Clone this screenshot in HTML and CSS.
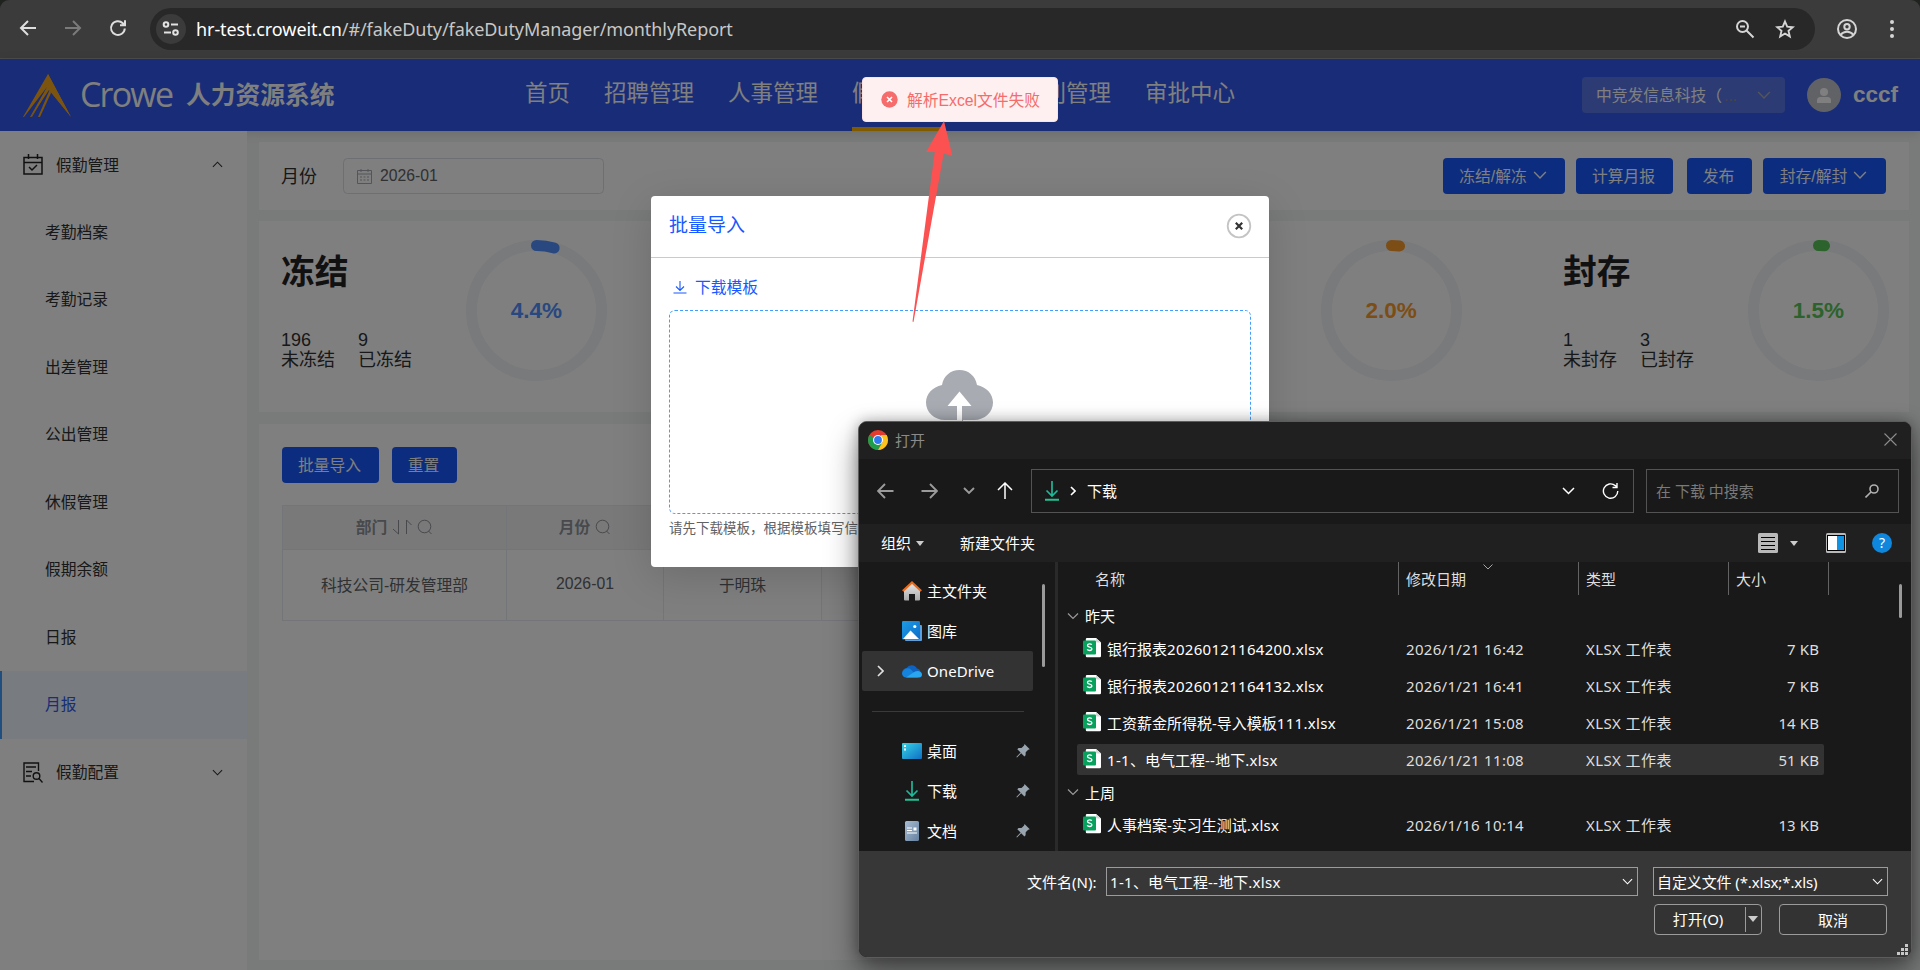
FILE: index.html
```html
<!DOCTYPE html>
<html lang="zh-CN">
<head>
  <meta charset="UTF-8" />
  <meta name="viewport" content="width=device-width, initial-scale=1.0" />
  <title>人力资源系统 - 月报</title>
  <link rel="stylesheet" href="styles.css">
</head>
<body>
  <!-- 公用图标 -->
  <svg class="defs" width="0" height="0">
    <defs>
      <linearGradient id="g-desk" x1="0" y1="0" x2="1" y2="1"><stop offset="0" stop-color="#35d3e6"/><stop offset="1" stop-color="#0f6fc4"/></linearGradient>
      <linearGradient id="g-doc" x1="0" y1="0" x2="1" y2="1"><stop offset="0" stop-color="#a9bdd3"/><stop offset="1" stop-color="#64809f"/></linearGradient>
      <linearGradient id="g-home" x1="0" y1="0" x2="0" y2="1"><stop offset="0" stop-color="#e8e8e8"/><stop offset="1" stop-color="#a8a8a8"/></linearGradient>
      <linearGradient id="g-pic" x1="0" y1="0" x2="1" y2="1"><stop offset="0" stop-color="#1e9be6"/><stop offset="1" stop-color="#0b6cc8"/></linearGradient>
    </defs>
    <symbol id="i-down" viewBox="0 0 12 12"><path d="M1 3.5l5 5 5-5" fill="none" stroke="currentColor" stroke-width="1.2"/></symbol>
    <symbol id="i-search" viewBox="0 0 16 16"><circle cx="7.5" cy="7.5" r="6.3" fill="none" stroke="currentColor"/><path d="M11.5 12l3 3" stroke="currentColor"/></symbol>
    <symbol id="i-dl" viewBox="0 0 14 20"><path d="M7 0v15M1.5 9.5L7 15l5.500-5.500" fill="none" stroke="#1fb899" stroke-width="1.7"/><path d="M0 18.700h14" stroke="#25c095" stroke-width="2"/></symbol>
    <symbol id="i-xls" viewBox="0 0 18 20">
      <path d="M4 0h9l5 4.500V18a1.200 1.200 0 0 1-1.200 1.200H4A1.200 1.200 0 0 1 2.800 18V1.200A1.200 1.200 0 0 1 4 0z" fill="#fff"/>
      <path d="M13 0l5 4.500h-4a1 1 0 0 1-1-1z" fill="#d5dbd8"/>
      <rect x="0" y="2.500" width="13" height="14" rx="1" fill="#07a05c"/>
      <path d="M8.800 6.700C8.300 6 7.500 5.800 6.600 5.800c-1.300 0-2.100.6-2.100 1.600 0 2.300 4.400 1 4.400 3.400 0 1.100-.9 1.700-2.300 1.700-1 0-1.900-.3-2.400-1.100" fill="none" stroke="#fff" stroke-width="1.300"/>
    </symbol>
    <symbol id="i-pin" viewBox="0 0 14 14"><path d="M8.500 0l5.300 5.300-1.600.4-2.500 2.600-.1 3-1.200 1.200L5.200 9.200 1 13.600l-.7-.7 4.300-4.300L1.300 5.300l1.200-1.200 3-.1 2.600-2.500z" fill="#98a4ae"/></symbol>
  </svg>

  <!-- 浏览器地址栏 -->
  <div class="browser-bar">
    <div class="browser-nav">
      <svg width="18" height="18" viewBox="0 0 18 18"><path d="M17 9H2.500M9 2L2 9l7 7" fill="none" stroke="#dedede" stroke-width="2"/></svg>
      <svg width="18" height="18" viewBox="0 0 18 18"><path d="M1 9h14.500M9 2l7 7-7 7" fill="none" stroke="#7b7b7b" stroke-width="2"/></svg>
      <svg width="18" height="18" viewBox="0 0 18 18"><path d="M15.800 9.500a6.900 6.900 0 1 1-2-5.300l1.700 1.700M16 1.200v5h-5" fill="none" stroke="#dedede" stroke-width="2"/></svg>
    </div>
    <div class="omnibox">
      <span class="site-info">
        <svg width="18" height="18" viewBox="0 0 18 18" fill="none" stroke="#e3e3e3" stroke-width="2"><circle cx="4" cy="4.500" r="2.300"/><path d="M9 4.500h7"/><circle cx="13.500" cy="12.500" r="2.300"/><path d="M2 12.500h7"/></svg>
      </span>
      <span class="url"><b>hr-test.croweit.cn</b>/#/fakeDuty/fakeDutyManager/monthlyReport</span>
      <svg class="zoom" width="20" height="20" viewBox="0 0 20 20" fill="none" stroke="#d5d5d5" stroke-width="2"><circle cx="7.500" cy="7.500" r="5.500"/><path d="M11.500 11.500l7 7M5 7.500h5"/></svg>
      <svg width="20" height="20" viewBox="0 0 20 20"><path d="M10 2.500l2.200 5.200 5.600.5-4.300 3.700 1.300 5.500-4.800-2.900-4.800 2.900 1.300-5.500L2.200 8.200l5.600-.5z" fill="none" stroke="#d5d5d5" stroke-width="1.900"/></svg>
    </div>
    <svg class="profile" width="22" height="22" viewBox="0 0 22 22" fill="none" stroke="#d5d5d5" stroke-width="2"><circle cx="11" cy="11" r="9"/><circle cx="11" cy="8.800" r="2.700"/><path d="M4.500 17c2-2.700 4-3.300 6.500-3.300s4.500.6 6.500 3.300"/></svg>
    <svg width="6" height="20" viewBox="0 0 6 20" fill="#d5d5d5"><circle cx="3" cy="3" r="2"/><circle cx="3" cy="10" r="2"/><circle cx="3" cy="17" r="2"/></svg>
  </div>

  <div class="app">
    <header class="header">
      <svg class="logo-mark" width="48" height="43" viewBox="0 0 48 43" fill="#f9a91a">
        <path d="M25 0L48 43 26 16 8 43H7L24 13 1 43H0z"/>
        <path d="M26 14L9 43H8l13-22z"/><path d="M27 15L15 43h2l11-24z"/><path d="M25 0l23 43-20-25-4-8z"/>
      </svg>
      <span class="logo-text">Crowe</span>
      <span class="system-name">人力资源系统</span>
      <nav class="nav">
        <a>首页</a><a>招聘管理</a><a>人事管理</a><a class="active">假勤管理</a><a>薪酬福利管理</a><a>审批中心</a>
      </nav>
      <div class="company"><span>中竞发信息科技（<i>...</i></span><svg width="14" height="14"><use href="#i-down"/></svg></div>
      <span class="avatar"><svg width="14" height="15" viewBox="0 0 14 15" fill="#fff"><circle cx="7" cy="4" r="4"/><path d="M0 15v-2.500A3.500 3.500 0 0 1 3.500 9h7a3.500 3.500 0 0 1 3.500 3.500V15z"/></svg></span>
      <span class="user">cccf</span>
    </header>

    <div class="main">
      <aside class="sidebar">
        <div class="menu-title">
          <svg width="20" height="21" viewBox="0 0 20 21" fill="none" stroke="#222" stroke-width="1.500"><rect x="1" y="3.500" width="18" height="16.500"/><path d="M1 8.500h18M5.500 0v5M14.500 0v5M6 13l3 3 5-5"/></svg>
          <span>假勤管理</span>
          <svg class="arrow up" width="11" height="11"><use href="#i-down"/></svg>
        </div>
        <a>考勤档案</a>
        <a>考勤记录</a>
        <a>出差管理</a>
        <a>公出管理</a>
        <a>休假管理</a>
        <a>假期余额</a>
        <a>日报</a>
        <a class="active">月报</a>
        <div class="menu-title">
          <svg width="20" height="21" viewBox="0 0 20 21" fill="none" stroke="#222" stroke-width="1.400"><path d="M11 19.500H1V1h14.500v8M3 5h10M3 9.500h6M3 14h5"/><circle cx="13.500" cy="14" r="3.300"/><path d="M16 16.500l3.500 4"/></svg>
          <span>假勤配置</span>
          <svg class="arrow" width="11" height="11"><use href="#i-down"/></svg>
        </div>
      </aside>

      <div class="content">
        <section class="card filter">
          <label>月份</label>
          <div class="date-input">
            <svg width="15" height="15" viewBox="0 0 15 15" fill="none" stroke="#a8abb2"><path d="M.5 1.500h14v13H.5zM.5 5h14M4 0v3M11 0v3"/><path d="M3 8h9M3 11h9" stroke-dasharray="2 1.500"/></svg>
            <span>2026-01</span>
          </div>
          <button class="btn w-122">冻结/解冻<svg width="14" height="14"><use href="#i-down"/></svg></button>
          <button class="btn w-97">计算月报</button>
          <button class="btn w-65 shift">发布</button>
          <button class="btn w-123">封存/解封<svg width="14" height="14"><use href="#i-down"/></svg></button>
        </section>

        <section class="card stats">
          <div class="stat">
            <div class="stat-info">
              <h2>冻结</h2>
              <div class="nums"><p>196<br>未冻结</p><p>9<br>已冻结</p></div>
            </div>
            <div class="ring blue">
              <svg width="141" height="141" viewBox="0 0 141 141"><circle cx="70.500" cy="70.500" r="65"/><circle class="bar" cx="70.500" cy="70.500" r="65" pathLength="100" stroke-dasharray="4.4 100"/></svg>
              <span>4.4%</span>
            </div>
          </div>
          <div class="stat"></div>
          <div class="stat">
            <div class="stat-info"></div>
            <div class="ring orange">
              <svg width="141" height="141" viewBox="0 0 141 141"><circle cx="70.500" cy="70.500" r="65"/><circle class="bar" cx="70.500" cy="70.500" r="65" pathLength="100" stroke-dasharray="2 100"/></svg>
              <span>2.0%</span>
            </div>
          </div>
          <div class="stat">
            <div class="stat-info">
              <h2>封存</h2>
              <div class="nums"><p>1<br>未封存</p><p>3<br>已封存</p></div>
            </div>
            <div class="ring green">
              <svg width="141" height="141" viewBox="0 0 141 141"><circle cx="70.500" cy="70.500" r="65"/><circle class="bar" cx="70.500" cy="70.500" r="65" pathLength="100" stroke-dasharray="1.5 100"/></svg>
              <span>1.5%</span>
            </div>
          </div>
        </section>

        <section class="card list">
          <div class="list-buttons">
            <button class="btn w-97">批量导入</button>
            <button class="btn w-65">重置</button>
          </div>
          <div class="table">
            <div class="th">部门
              <svg class="sort" width="20" height="16" viewBox="0 0 20 16" fill="none" stroke="currentColor"><path d="M1 10l5.500 5V1M14.500 15V1l5 5"/></svg>
              <svg width="16" height="16"><use href="#i-search"/></svg>
            </div>
            <div class="th">月份<svg width="16" height="16"><use href="#i-search"/></svg></div>
            <div class="th"></div>
            <div class="th"></div>
            <div class="td">科技公司-研发管理部</div>
            <div class="td">2026-01</div>
            <div class="td">于明珠</div>
            <div class="td"></div>
          </div>
        </section>
      </div>
    </div>
    <div class="mask"></div>
  </div>

  <!-- 批量导入弹窗 -->
  <div class="modal">
    <div class="modal-header">
      <h3>批量导入</h3>
      <svg width="26" height="26" viewBox="0 0 26 26" fill="none"><circle cx="13" cy="13" r="11.300" stroke="#c4c4c4" stroke-width="1.800"/><path d="M9.800 9.800l6.400 6.400M16.200 9.800l-6.400 6.400" stroke="#333" stroke-width="2.200"/></svg>
    </div>
    <div class="modal-body">
      <div class="download">
        <svg width="14" height="14" viewBox="0 0 14 14" fill="none" stroke="#1859ff" stroke-width="1.100"><path d="M7 1v9M3 6.500l4 4 4-4M.5 13h13"/></svg>
        <span>下载模板</span>
      </div>
      <div class="upload">
        <svg width="67" height="58" viewBox="0 0 67 58" fill="#a8abb2"><path d="M30 50H19C8 50 0 42 0 32.500 0 24 6.500 17 16 15 17.500 6 24.500 0 33.500 0S49.500 6 51 15c9.500 2 16 9 16 17.500C67 42 59 50 48 50H37v8h-6v-8z"/><path d="M31 58V36h-9.500L33.500 21.500 45.500 36H36v22z" fill="#fff"/></svg>
      </div>
      <p class="hint">请先下载模板，根据模板填写信</p>
    </div>
  </div>

  <div class="message">
    <svg width="17" height="17" viewBox="0 0 17 17"><circle cx="8.500" cy="8.500" r="8.200" fill="#f56c6c"/><path d="M6 6l5 5M11 6l-5 5" stroke="#fff" stroke-width="1.600"/></svg>
    <span>解析Excel文件失败</span>
  </div>

  <!-- 打开文件窗口 -->
  <div class="file-dialog">
    <div class="fd-title">
      <svg width="20" height="20" viewBox="0 0 20 20"><circle cx="10" cy="10" r="10" fill="#e33b2e"/><path d="M1.340 5A10 10 0 0 0 10 20l4.300-7.500L10 10z" fill="#1e9e4a"/><path d="M18.660 5A10 10 0 0 1 10 20l4.330-7.500L13 5z" fill="#fcc31e"/><circle cx="10" cy="10" r="5" fill="#fff"/><circle cx="10" cy="10" r="3.900" fill="#2f7af0"/></svg>
      <span>打开</span>
      <svg class="close" width="13" height="13" viewBox="0 0 13 13"><path d="M.5.5l12 12M12.500.5l-12 12" stroke="#8c8c8c" stroke-width="1.100"/></svg>
    </div>
    <div class="fd-nav">
      <svg width="17" height="16" viewBox="0 0 17 16" fill="none" stroke="#9b9b9b" stroke-width="1.900"><path d="M16.500 8H1.500M8 1L1 8l7 7"/></svg>
      <svg width="17" height="16" viewBox="0 0 17 16" fill="none" stroke="#9b9b9b" stroke-width="1.900"><path d="M.5 8h15M9 1l7 7-7 7"/></svg>
      <svg class="recent" width="12" height="8" viewBox="0 0 12 8" fill="none" stroke="#9b9b9b" stroke-width="1.900"><path d="M1 1l5 5 5-5"/></svg>
      <svg width="16" height="17" viewBox="0 0 16 17" fill="none" stroke="#fff" stroke-width="1.500"><path d="M8 17V1.500M1 8l7-7 7 7"/></svg>
      <div class="address">
        <svg width="14" height="20"><use href="#i-dl"/></svg>
        <svg width="6" height="10" viewBox="0 0 6 10" fill="none" stroke="#fff" stroke-width="1.600"><path d="M1 1l4 4-4 4"/></svg>
        <span>下载</span>
        <svg class="drop" width="13" height="8" viewBox="0 0 13 8" fill="none" stroke="#fff" stroke-width="1.500"><path d="M1 1l5.500 5.500L12 1"/></svg>
        <svg width="17" height="18" viewBox="0 0 17 18" fill="none" stroke="#fff" stroke-width="1.400"><path d="M15.800 9a7.200 7.200 0 1 1-2.500-5.400L15 5.200M15 1v4.500h-4.500"/></svg>
      </div>
      <div class="search">
        <span>在 下载 中搜索</span>
        <svg width="14" height="14" viewBox="0 0 14 14" fill="none" stroke="#b0b0b0" stroke-width="1.600"><circle cx="9" cy="5" r="4"/><path d="M6 8L.5 13.500"/></svg>
      </div>
    </div>
    <div class="fd-tools">
      <span>组织</span><i class="caret"></i>
      <span class="new-folder">新建文件夹</span>
      <svg class="view" width="20" height="20" viewBox="0 0 20 20"><rect width="20" height="20" rx="1.500" fill="#b9b9b9"/><path d="M3 4.500h14M3 8.500h14M3 12.500h14M3 16.500h14" stroke="#000" stroke-width="1"/></svg>
      <i class="caret"></i>
      <svg class="pane" width="20" height="20" viewBox="0 0 20 20"><rect width="20" height="20" rx="1.500" fill="#b9b9b9"/><path d="M1 2h18v16H1z" fill="#000"/><path d="M2 3h9v14H2z" fill="#fff"/><path d="M11 3h7v14h-7z" fill="#1193e4"/></svg>
      <span class="help">?</span>
    </div>
    <div class="fd-body">
      <div class="tree">
        <div class="node"><svg width="20" height="20" viewBox="0 0 20 20"><path d="M2 9l8-7 8 7v9.500a1 1 0 0 1-1 1h-4V13H7v6.500H3a1 1 0 0 1-1-1z" fill="url(#g-home)"/><path d="M.8 10L10 1.500 19.200 10" fill="none" stroke="#ea6a1c" stroke-width="2.200"/></svg><span>主文件夹</span></div>
        <div class="node"><svg width="20" height="20" viewBox="0 0 20 20"><path d="M3 4h16a1 1 0 0 1 1 1v14a1 1 0 0 1-1 1H4a1 1 0 0 1-1-1z" fill="#5aa0e0"/><rect width="18" height="18.500" rx="1.200" fill="url(#g-pic)"/><path d="M1 18l7.500-8.500L17 18z" fill="#fff"/><circle cx="12.800" cy="5.500" r="1.600" fill="#fff"/></svg><span>图库</span></div>
        <div class="node current"><svg class="expand" width="7" height="12" viewBox="0 0 7 12"><path d="M1 1l5 5-5 5" fill="none" stroke="#e0e0e0" stroke-width="1.700"/></svg><svg width="20" height="14" viewBox="0 0 20 14"><path d="M5 13a4.500 4.500 0 0 1-.5-9A6 6 0 0 1 15 4.500a4.500 4.500 0 0 1 1 8.500z" fill="#0f62c0"/><path d="M4 13.500a4 4 0 0 1-3-6.500c3-3.500 6-3 8-1.500l7 8z" fill="#1583dc"/><path d="M4 13.500l9-6c3-1.500 7 0 7 3a3 3 0 0 1-3 3z" fill="#2aa6ee"/></svg><span class="latin">OneDrive</span></div>
        <div class="tree-line"></div>
        <div class="node"><svg width="20" height="16" viewBox="0 0 20 16"><rect width="20" height="16" rx="1" fill="url(#g-desk)"/><path d="M2 2h2v2H2zM2 5.500h2v2H2z" fill="#fff"/></svg><span>桌面</span><svg class="pin" width="14" height="14"><use href="#i-pin"/></svg></div>
        <div class="node"><svg width="20" height="20"><use href="#i-dl"/></svg><span>下载</span><svg class="pin" width="14" height="14"><use href="#i-pin"/></svg></div>
        <div class="node"><svg width="20" height="20" viewBox="0 0 20 20"><rect x="3" width="14" height="20" rx="1.500" fill="url(#g-doc)"/><path d="M5 7h5M5 9.500h5M5 12h10" stroke="#fff" stroke-width="1.200"/><path d="M11.500 6.500h3v3h-3z" fill="#fff"/></svg><span>文档</span><svg class="pin" width="14" height="14"><use href="#i-pin"/></svg></div>
      </div>
      <div class="tree-scroll"></div>
      <div class="files">
        <div class="file-head">
          <span>名称</span>
          <span>修改日期<svg class="sorted" width="10" height="6" viewBox="0 0 10 6"><path d="M.5.500L5 5 9.500.500" fill="none" stroke="#a5a5a5"/></svg></span>
          <span>类型</span>
          <span>大小</span>
          <span></span>
        </div>
        <div class="group"><svg width="12" height="12"><use href="#i-down"/></svg>昨天</div>
        <div class="file"><span><svg width="18" height="20"><use href="#i-xls"/></svg>银行报表<em>20260121164200.xlsx</em></span><span>2026/1/21 16:42</span><span>XLSX 工作表</span><span>7 KB</span></div>
        <div class="file"><span><svg width="18" height="20"><use href="#i-xls"/></svg>银行报表<em>20260121164132.xlsx</em></span><span>2026/1/21 16:41</span><span>XLSX 工作表</span><span>7 KB</span></div>
        <div class="file"><span><svg width="18" height="20"><use href="#i-xls"/></svg>工资薪金所得税-导入模板<em>111.xlsx</em></span><span>2026/1/21 15:08</span><span>XLSX 工作表</span><span>14 KB</span></div>
        <div class="file selected"><span><svg width="18" height="20"><use href="#i-xls"/></svg><em>1-1</em>、电气工程<em>--</em>地下<em>.xlsx</em></span><span>2026/1/21 11:08</span><span>XLSX 工作表</span><span>51 KB</span></div>
        <div class="group last-week"><svg width="12" height="12"><use href="#i-down"/></svg>上周</div>
        <div class="file"><span><svg width="18" height="20"><use href="#i-xls"/></svg>人事档案-实习生测试<em>.xlsx</em></span><span>2026/1/16 10:14</span><span>XLSX 工作表</span><span>13 KB</span></div>
      </div>
      <div class="file-scroll"></div>
    </div>
    <div class="fd-footer">
      <div class="fd-row">
        <label>文件名(N):</label>
        <div class="field name"><span><em>1-1</em>、电气工程<em>--</em>地下<em>.xlsx</em></span><svg width="11" height="11"><use href="#i-down"/></svg></div>
        <div class="field type"><span>自定义文件 (*.xlsx;*.xls)</span><svg width="11" height="11"><use href="#i-down"/></svg></div>
      </div>
      <div class="fd-row actions">
        <div class="fd-btn open"><span>打开(O)</span><i class="caret"></i></div>
        <div class="fd-btn">取消</div>
      </div>
      <svg class="grip" width="12" height="12" viewBox="0 0 12 12" fill="#c8c8c8"><path d="M8 0h3v3H8zM8 4h3v3H8zM4 4h3v3H4zM8 8h3v3H8zM4 8h3v3H4zM0 8h3v3H0z"/></svg>
    </div>
  </div>

  <!-- 标注箭头 -->
  <svg class="pointer" width="40" height="204" viewBox="912 120 40 204"><path d="M944 121L952.500 156 943.700 153.500 913.500 322 912.500 321.500 934.700 152 926 152z" fill="#fc5151"/></svg>
</body>
</html>
```
FILE: styles.css
```css
* { box-sizing: border-box; }
body {
  margin: 0;
  width: 1920px;
  height: 970px;
  overflow: hidden;
  position: relative;
  background: #202220;
  font-family: "Liberation Sans", "Noto Sans CJK SC", sans-serif;
  font-size: 15.75px;
  color: #303133;
}
h2, h3, p { margin: 0; }
i, em { font-style: normal; }
svg { flex: none; display: block; }
.defs { position: absolute; }

/* 浏览器 */
.browser-bar {
  height: 59px;
  background: #3b3b3b;
  border-bottom: 1px solid #4c4c4c;
  border-radius: 9px 9px 0 0;
  display: flex;
  align-items: center;
  padding-left: 19px;
}
.browser-nav { display: flex; gap: 27px; width: 131px; margin-top: -2px; }
.omnibox {
  width: 1665px;
  height: 42px;
  border-radius: 21px;
  background: #282828;
  display: flex;
  align-items: center;
  padding: 0 20px 0 6px;
}
.site-info {
  width: 30px; height: 30px;
  border-radius: 50%;
  background: #3b3b3b;
  display: flex; align-items: center; justify-content: center;
}
.url {
  font-family: "Noto Sans", sans-serif;
  font-size: 18px;
  letter-spacing: -.08px;
  color: #c7c7c7;
  margin-left: 10px;
  padding-bottom: 1px;
}
.url b { font-weight: 400; color: #fff; }
.zoom { margin-left: auto; margin-right: 20px; }
.profile { margin: 0 31px 0 21px; }

/* 顶栏 */
.app {
  position: relative;
  height: 911px;
  background: #f3f4f5;
}
.header {
  height: 72px;
  background: #3058f0;
  color: #fff;
  display: flex;
  align-items: center;
  padding-left: 23px;
  box-shadow: 0 2px 10px rgba(0, 0, 0, .12);
}
.logo-text {
  font-family: "Open Sans", sans-serif;
  font-weight: 400;
  font-size: 34px;
  letter-spacing: -1.8px;
  margin: -2px 0 0 9px;
  width: 106px;
}
.system-name { font-size: 24.75px; font-weight: 700; width: 339px; margin-top: -4px; }
.nav { display: flex; gap: 34px; height: 72px; width: 1057px; flex: none; }
.nav a { font-size: 22.5px; line-height: 69px; white-space: nowrap; }
.nav .active { border-bottom: 4px solid #ffb400; }
.company {
  width: 203px; height: 36px;
  flex: none;
  background: #5a76e8;
  border-radius: 4px;
  display: flex; align-items: center; justify-content: space-between;
  padding: 0 14px;
}
.company span { padding-bottom: 1px; }
.company i { color: #8c8c8c; margin-left: 2px; }
.company svg { color: #a8abb2; }
.avatar {
  width: 34px; height: 34px;
  flex: none;
  margin: 0 12px 0 22px;
  border-radius: 50%;
  background: #c0c4cc;
  display: flex; align-items: center; justify-content: center;
}
.user { font-size: 22.5px; font-weight: 700; }

/* 左侧菜单 */
.main { display: flex; height: 839px; }
.sidebar { width: 247px; background: #fff; }
.sidebar a {
  display: block;
  height: 67.5px;
  line-height: 67.5px;
  padding-left: 45px;
}
.sidebar .active {
  background: #f0f7ff;
  color: #325af2;
  border-left: 2px solid #409eff;
  padding-left: 43px;
}
.menu-title {
  height: 67.5px;
  display: flex; align-items: center;
  padding: 0 24px 0 23px;
}
.menu-title span { margin-left: 13px; padding-bottom: 1px; }
.menu-title .arrow { margin-left: auto; }
.up { transform: rotate(180deg); }

/* 内容区 */
.content { width: 1662px; padding: 11px 0 0 12px; }
.card { background: #fff; }
.filter {
  height: 68px;
  display: flex; align-items: center;
  padding: 0 23px 0 22px;
}
.filter label { font-size: 18px; width: 62px; padding-bottom: 2px; }
.date-input {
  width: 261px; height: 36px;
  border: 1px solid #dcdfe6;
  border-radius: 4.5px;
  display: flex; align-items: center; gap: 8px;
  padding-left: 13px;
  margin-right: auto;
  color: #606266;
}
.btn {
  height: 36px;
  border: 0;
  border-radius: 4px;
  padding: 0 2px 2px 0;
  margin-right: 11px;
  background: #1859ff;
  color: #fff;
  font: inherit;
  display: flex; align-items: center; justify-content: center; gap: 6px;
}
.filter .btn:last-child { margin-right: 0; }
.filter .shift { margin-left: 3px; }
.w-122 { width: 122px; }
.w-97 { width: 97px; }
.w-65 { width: 65px; }
.w-123 { width: 123px; }

.stats {
  height: 191px;
  margin-top: 11px;
  display: grid;
  grid-template-columns: repeat(4, 427.3px);
  overflow: hidden;
}
.stat { display: flex; padding: 19px 0 0 22px; }
.stat-info { width: 185px; padding-top: 6px; }
.stat h2 { font-size: 33.75px; line-height: 52px; color: #222; }
.nums { display: flex; gap: 23px; margin-top: 32px; font-size: 18px; line-height: 20px; }
.ring {
  width: 141px; height: 141px;
  display: grid;
  place-items: center;
}
.ring svg, .ring span { grid-area: 1 / 1; }
.ring span { font-size: 22.5px; font-weight: 700; color: var(--c); }
.ring svg { transform: rotate(-90deg); }
.ring circle { fill: none; stroke: #f2f4f8; stroke-width: 11px; }
.ring .bar { stroke: var(--c); stroke-linecap: round; }
.blue { --c: #5090ff; }
.orange { --c: #fb9a2c; }
.green { --c: #58c658; }

.list { height: 536px; margin-top: 12px; padding: 23px 0 0 23px; overflow: hidden; }
.list-buttons { display: flex; gap: 2px; }
.table {
  display: grid;
  grid-template-columns: 224px 157px 158px 1066px;
  grid-template-rows: 44px 71px;
  margin-top: 22px;
  width: 1605px;
  border-top: 1px solid #e8eaf0;
  border-left: 1px solid #e8eaf0;
}
.th, .td {
  border-right: 1px solid #e8eaf0;
  border-bottom: 1px solid #e8eaf0;
  padding-bottom: 2px;
  display: flex; align-items: center; justify-content: center;
}
.th { background: #f3f3f4; font-weight: 700; color: #909399; gap: 5px; }
.td { color: #606266; }

.mask { position: absolute; inset: 0; background: rgba(0, 0, 0, .5); }

/* 弹窗 */
.modal {
  position: absolute;
  left: 651px; top: 196px;
  width: 618px; height: 371px;
  background: #fff;
  border-radius: 4px;
  box-shadow: 0 10px 40px rgba(0, 0, 0, .15);
}
.modal-header {
  height: 62px;
  border-bottom: 1px solid #c8cacc;
  display: flex; justify-content: space-between; align-items: center;
  padding: 0 17px 0 18px;
}
.modal h3 { font-size: 19px; font-weight: 400; color: #1859ff; margin-top: -6px; }
.modal-header svg { margin-top: -1px; }
.modal-body { padding: 17px 18px 0; }
.download { display: flex; align-items: center; gap: 8px; padding-left: 4px; height: 24px; color: #1859ff; }
.download span { padding-bottom: 1px; }
.upload {
  height: 204px;
  margin-top: 11px;
  border: 1px dashed #409eff;
  border-radius: 6px;
  display: flex; justify-content: center;
  padding: 59px 1px 0 0;
}
.hint { font-size: 13.5px; line-height: 20px; margin-top: 5px; color: #606266; }

.message {
  position: absolute;
  left: 862px; top: 77px;
  width: 196px; height: 45px;
  border: 1px solid #fde2e2;
  border-radius: 4px;
  background: #fef0f0;
  color: #f56c6c;
  display: flex; align-items: center; gap: 9px;
  padding: 0 0 1px 18px;
}

/* 文件选择窗口 */
.file-dialog {
  position: absolute;
  left: 858px; top: 421px;
  width: 1054px; height: 537px;
  border: 1px solid #5c5c5c;
  border-radius: 9px;
  overflow: hidden;
  background: #191919;
  color: #fff;
  font-family: "Noto Sans", "Noto Sans CJK SC", sans-serif;
  font-size: 15px;
  box-shadow: 0 16px 32px rgba(0, 0, 0, .42), 0 0 14px rgba(0, 0, 0, .3);
}
.fd-title {
  height: 37px;
  background: #202020;
  display: flex; align-items: center; gap: 7px;
  padding: 0 14px 2px 9px;
  color: #8b8b8b;
}
.close { margin-left: auto; }
.fd-nav { height: 65px; display: flex; align-items: center; padding: 0 0 2px 18px; }
.fd-nav > svg { margin-right: 27px; }
.fd-nav > .recent { margin: 0 22px 0 -2px; }
.fd-nav > .recent + svg { margin-right: 18px; }
.address, .search {
  height: 44px;
  border: 1px solid #535353;
  display: flex; align-items: center;
}
.address { width: 603px; padding: 0 14px 0 13px; margin-right: 12px; }
.address span { margin-left: 11px; }
.address svg + svg { margin-left: 11px; }
.address .drop { margin: 0 27px 0 auto; }
.address .drop + svg { margin-left: 0; }
.search { width: 253px; padding: 0 19px 0 9px; justify-content: space-between; color: #7a7a7a; }
.fd-tools {
  height: 38px;
  background: #202020;
  display: flex; align-items: center;
  padding: 0 19px 0 22px;
}
.fd-tools > span { padding-bottom: 1px; }
.caret {
  border: 4px solid transparent;
  border-top: 5px solid #ccc;
  border-bottom: 0;
  margin-left: 5px;
}
.new-folder { margin-left: 36px; }
.view { margin-left: auto; }
.view + .caret { margin-left: 12px; }
.pane { margin: 0 26px 0 28px; }
.help {
  width: 20px; height: 20px;
  border-radius: 50%;
  background: #0f87dc;
  font-size: 14px; line-height: 20px;
  text-align: center;
}
.fd-body { height: 289px; display: flex; }
.tree { width: 171px; flex: none; padding: 9px 0 0; margin-left: 3px; }
.node {
  height: 40px;
  display: flex; align-items: center; gap: 5px;
  padding-left: 40px;
  position: relative;
}
.node span { padding-bottom: 1px; }
.latin { letter-spacing: .1px; }
.current { background: #333; border-radius: 2px; }
.expand { position: absolute; left: 15px; }
.pin { margin: 0 3px 0 auto; }
.tree-line { height: 1px; background: #3a3a3a; margin: 20px 9px 19px 10px; }
.tree-scroll { width: 3px; height: 83px; flex: none; border-radius: 2px; background: #9a9a9a; margin: 22px 10px 0 9px; }
.files { width: 840px; flex: none; border-left: 3px solid #2a2a2a; padding-left: 19px; }
.file-head {
  display: grid;
  grid-template-columns: 321px 180px 150px 100px 1px;
  height: 36px;
  line-height: 34px;
  color: #dedede;
}
.file-head span { height: 33px; border-left: 1px solid #636363; padding-left: 7px; position: relative; }
.file-head span:first-child { border: 0; padding-left: 18px; }
.file-head span:last-child { padding: 0; }
.sorted { position: absolute; left: 84px; top: 2px; }
.group { height: 35px; display: flex; align-items: center; gap: 6px; margin-left: -10px; }
.group svg { color: #999; }
.file {
  width: 747px; height: 31px;
  margin-bottom: 6px;
  display: grid;
  grid-template-columns: 329px 180px 138px 95px;
  align-items: center;
  color: #dedede;
  letter-spacing: .3px;
}
.file span:first-child { display: flex; align-items: center; padding-left: 6px; color: #fff; white-space: nowrap; letter-spacing: 0; }
.file span:first-child svg { margin: -2px 6px 0 0; }
.file em { letter-spacing: .3px; }
.file span:nth-child(3) { letter-spacing: .4px; }
.file span:last-child { text-align: right; letter-spacing: .1px; }
.selected { background: #333; border-radius: 2px; margin-bottom: 0; }
.group.last-week { height: 34px; }
.file-scroll { width: 3px; height: 34px; flex: none; border-radius: 2px; background: #9a9a9a; margin: 22px 0 0 4px; }

.fd-footer { height: 106px; background: #373737; padding-top: 16px; position: relative; }
.fd-row { display: flex; align-items: center; height: 29px; padding-left: 168px; }
.fd-row label { width: 79px; padding-bottom: 1px; }
.field {
  height: 29px;
  border: 1px solid #9b9b9b;
  display: flex; align-items: center; justify-content: space-between;
  padding: 0 4px 1px 3px;
}
.field em { letter-spacing: .3px; }
.name { width: 532px; margin-right: 15px; }
.type { width: 235px; background: #323232; letter-spacing: -.1px; }
.actions { height: 31px; margin-top: 8px; padding: 0 24px 0 0; justify-content: flex-end; gap: 17px; }
.fd-btn {
  width: 108px; height: 31px;
  border: 1px solid #9b9b9b;
  border-radius: 4px;
  background: #333;
  padding-bottom: 1px;
  display: flex; align-items: center; justify-content: center;
}
.open span { width: 90px; height: 25px; line-height: 24px; padding-right: 5px; text-align: center; border-right: 1px solid #9b9b9b; }
.open .caret { margin: 0 2px; border-width: 6px 5px 0; }
.grip { position: absolute; right: 2px; bottom: 1px; }

.pointer { position: absolute; left: 912px; top: 120px; }
```
